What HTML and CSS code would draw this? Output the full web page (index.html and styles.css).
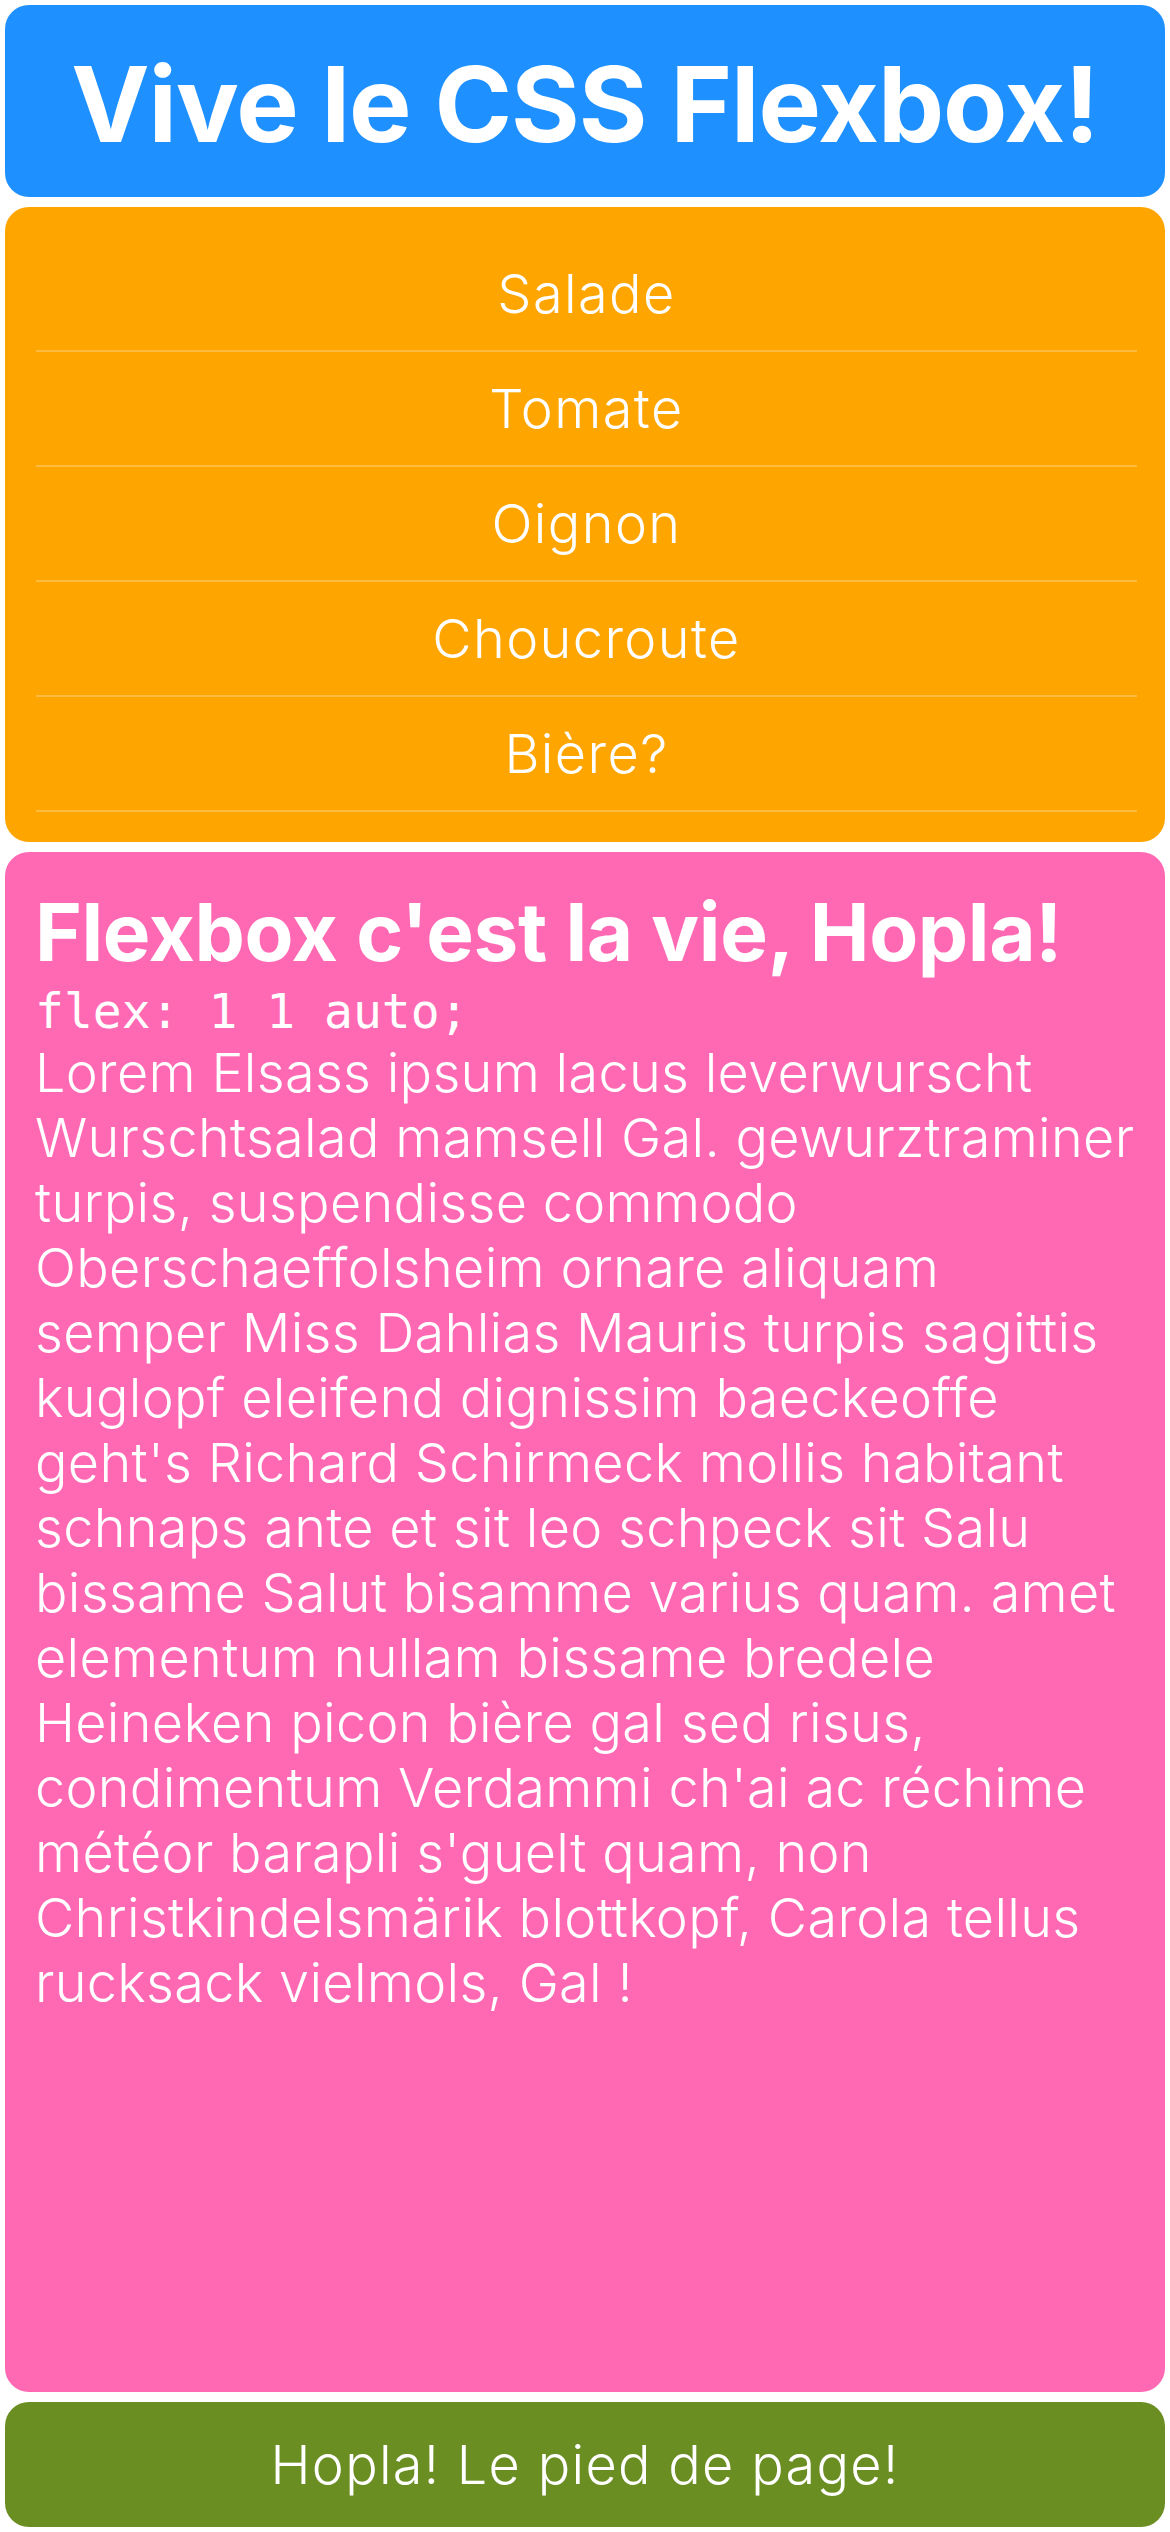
FILE: index.html
```html
<!DOCTYPE html>
<html lang="fr">
<head>
<meta charset="utf-8">
<title>Vive le CSS Flexbox!</title>
<link rel="stylesheet" href="styles.css">
</head>
<body>
<div class="page">
  <header class="box header">
    <h1 class="title">Vive le CSS Flexbox!</h1>
  </header>
  <nav class="box menu">
    <ul class="menu-list">
      <li class="menu-item">Salade</li>
      <li class="menu-item">Tomate</li>
      <li class="menu-item">Oignon</li>
      <li class="menu-item">Choucroute</li>
      <li class="menu-item">Bière?</li>
    </ul>
  </nav>
  <main class="box content">
    <h2 class="content-title">Flexbox c'est la vie, Hopla!</h2>
    <code class="content-code">flex: 1 1 auto;</code>
    <p class="content-text">Lorem Elsass ipsum lacus leverwurscht Wurschtsalad mamsell Gal. gewurztraminer turpis, suspendisse commodo Oberschaeffolsheim ornare aliquam semper Miss Dahlias Mauris turpis sagittis kuglopf eleifend dignissim baeckeoffe geht's Richard Schirmeck mollis habitant schnaps ante et sit leo schpeck sit Salu bissame Salut bisamme varius quam. amet elementum nullam bissame bredele Heineken picon bière gal sed risus, condimentum Verdammi ch'ai ac réchime météor barapli s'guelt quam, non Christkindelsmärik blottkopf, Carola tellus rucksack vielmols, Gal !</p>
  </main>
  <footer class="box footer">
    <p class="footer-text">Hopla! Le pied de page!</p>
  </footer>
</div>
</body>
</html>
```
FILE: styles.css
```css
html, body {
  margin: 0;
  padding: 0;
}

body {
  font-family: "Inter", "Liberation Sans", sans-serif;
  font-weight: 300;
  color: #fff;
  background: #fff;
}

.page {
  box-sizing: border-box;
  height: 100vh;
  padding: 5px;
  display: flex;
  flex-direction: column;
  gap: 10px;
}

.box {
  border-radius: 24px;
  flex: 0 0 auto;
}

/* header */
.header {
  background: #1e90ff;
  padding: 34px 20px 28px;
}

.title {
  margin: 0;
  font-size: 105px;
  line-height: 130px;
  font-weight: 700;
  letter-spacing: -1px;
  text-align: center;
}

/* menu */
.menu {
  background: #ffa500;
  padding: 30px 28px 30px 31px;
}

.menu-list {
  list-style: none;
  margin: 0;
  padding: 0;
}

.menu-item {
  font-size: 54px;
  line-height: 65px;
  padding: 24px 0;
  text-align: center;
  border-bottom: 2px solid rgba(255, 255, 255, 0.25);
  letter-spacing: 1.4px;
}

/* main content */
.content {
  background: #ff69b4;
  flex: 1 1 auto;
  padding: 32px 30px 30px;
  display: flex;
  flex-direction: column;
}

.content-title {
  margin: 0;
  font-size: 80px;
  line-height: 95px;
  font-weight: 700;
  letter-spacing: -0.4px;
}

.content-code {
  display: block;
  font-family: "DejaVu Sans Mono", monospace;
  font-weight: 400;
  font-size: 48px;
  line-height: 57px;
  padding-top: 4px;
}

.content-text {
  margin: 0;
  font-size: 54px;
  line-height: 65px;
  letter-spacing: 0.3px;
}

/* footer */
.footer {
  background: #6b8e23;
  padding: 30px;
}

.footer-text {
  margin: 0;
  font-size: 54px;
  line-height: 65px;
  text-align: center;
  letter-spacing: 1.3px;
}
```
